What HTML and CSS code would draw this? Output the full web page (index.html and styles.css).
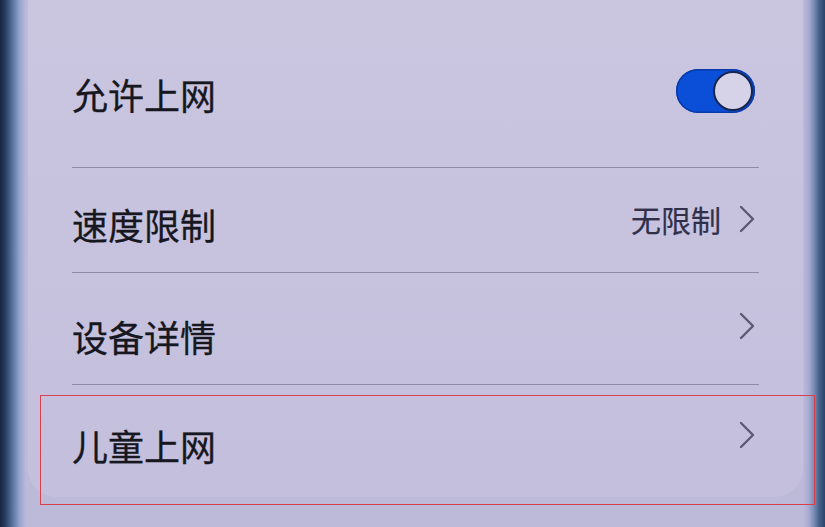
FILE: index.html
```html
<!DOCTYPE html>
<html lang="zh-CN">
<head>
<meta charset="utf-8">
<title>上网设置</title>
<link rel="stylesheet" href="styles.css">
</head>
<body>
<div class="frame">
  <div class="bezel bezel-left"></div>
  <div class="screen">
    <div class="card">
      <div class="row row-1">
        <span class="label">允许上网</span>
        <span class="toggle"><span class="knob"></span></span>
      </div>
      <div class="row row-2">
        <span class="label shift-down-sm">速度限制</span>
        <span class="right shift-up-sm">
          <span class="value">无限制</span>
          <svg class="chev" viewBox="0 0 16 28" width="16" height="28"><path d="M2 2 L14 14 L2 26" fill="none" stroke="#5c5a72" stroke-width="2.4" stroke-linecap="round" stroke-linejoin="round"/></svg>
        </span>
      </div>
      <div class="row row-3">
        <span class="label shift-down">设备详情</span>
        <span class="right shift-up">
          <svg class="chev" viewBox="0 0 16 28" width="16" height="28"><path d="M2 2 L14 14 L2 26" fill="none" stroke="#5c5a72" stroke-width="2.4" stroke-linecap="round" stroke-linejoin="round"/></svg>
        </span>
      </div>
      <div class="row row-4">
        <span class="label shift-down-sm">儿童上网</span>
        <span class="right shift-up-more">
          <svg class="chev" viewBox="0 0 16 28" width="16" height="28"><path d="M2 2 L14 14 L2 26" fill="none" stroke="#5c5a72" stroke-width="2.4" stroke-linecap="round" stroke-linejoin="round"/></svg>
        </span>
      </div>
    </div>
  </div>
  <div class="bezel bezel-right"></div>
  <div class="highlight"></div>
</div>
</body>
</html>
```
FILE: styles.css
```css
* { box-sizing: border-box; }
html, body { margin: 0; padding: 0; }
body {
  width: 825px;
  height: 527px;
  overflow: hidden;
  background: #bebad9;
  font-family: "Noto Sans CJK SC", "Noto Sans", sans-serif;
}
.frame {
  position: relative;
  display: flex;
  width: 825px;
  height: 527px;
}
.bezel-left {
  width: 26px;
  background: linear-gradient(90deg, #15233f 0px, #2c4266 6px, #5b77a3 13px, #98a6cf 20px, #bcb9dc 26px);
}
.bezel-right {
  width: 22px;
  background: linear-gradient(90deg, #bebadb 0px, #a6aad0 6px, #7a8cb5 11px, #46628c 16px, #2a4468 22px);
}
.screen {
  flex: 1;
  background: #bdb9d9;
  padding-left: 2px;
}
.card {
  height: 497px;
  background: linear-gradient(180deg, #cac6e0 0%, #c6c2de 60%, #c3bfdc 100%);
  border-radius: 0 0 28px 28px;
  padding: 0 44px 0 44px;
  display: flex;
  flex-direction: column;
}
.row {
  display: flex;
  align-items: center;
  justify-content: space-between;
  border-bottom: 1.5px solid #8e8ba4;
}
.row-1 { height: 168px; padding-top: 20px; }
.row-2 { height: 105px; }
.row-3 { height: 112px; }
.row-4 { height: 112px; border-bottom: none; }
.label {
  font-size: 36px;
  line-height: 44px;
  color: #17171f;
  -webkit-text-stroke: 0.3px #17171f;
}
.shift-down { margin-top: 14px; }
.shift-down-sm { margin-top: 8px; }
.shift-up-sm { margin-top: -2px; }
.shift-up { margin-top: -6px; }
.shift-up-more { margin-top: -12px; }
.right {
  display: flex;
  align-items: center;
  gap: 18px;
  padding-right: 4px;
}
.value {
  font-size: 30px;
  line-height: 36px;
  color: #30304a;
  -webkit-text-stroke: 0.2px #30304a;
}
.chev { display: block; }
.toggle {
  position: relative;
  width: 79px;
  height: 44px;
  border-radius: 22px;
  background: #0b4fd8;
  box-shadow: inset 0 0 0 1.5px #0a3aa8;
  margin-right: 4px;
  margin-top: -6px;
}
.knob {
  position: absolute;
  right: 2px;
  top: 2px;
  width: 40px;
  height: 40px;
  border-radius: 50%;
  background: #d6d3e8;
  border: 2.5px solid #18254f;
}
.highlight {
  position: absolute;
  left: 40px;
  top: 395px;
  width: 775px;
  height: 110px;
  border: 1.5px solid #d8404c;
  pointer-events: none;
}
```
